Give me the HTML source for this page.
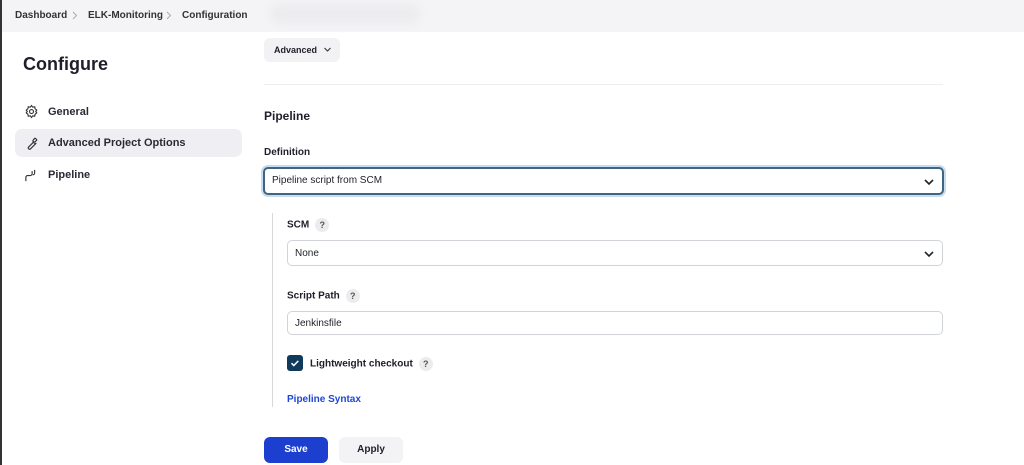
<!DOCTYPE html>
<html><head><meta charset="utf-8"><style>
*{box-sizing:border-box;margin:0;padding:0}
body{width:1024px;height:465px;overflow:hidden;background:#fff;font-family:"Liberation Sans",sans-serif;color:#1f1f2b;position:relative}
.lb{position:absolute;left:0;top:0;width:2px;height:465px;background:#333}
.hdr{position:absolute;left:2px;top:0;width:1022px;height:32px;background:#f4f4f6}
.blur{position:absolute;left:270px;top:4px;width:150px;height:20px;background:#ececef;border-radius:10px;filter:blur(4px)}
.bc{position:absolute;top:10px;font-size:10px;font-weight:bold;color:#333}
.abs{position:absolute}
h1{position:absolute;left:23px;top:54px;font-size:18px;font-weight:bold;color:#1f1f2b}
.nav{position:absolute;left:48px;font-size:11px;font-weight:bold;color:#2a2a36}
.sel{position:absolute;left:15px;top:129px;width:227px;height:28px;background:#efeff3;border-radius:7px}
.btnadv{position:absolute;left:264px;top:38px;width:76px;height:24px;background:#f2f2f5;border-radius:6px;font-size:9px;font-weight:bold;padding:7px 0 0 10px}
.hr{position:absolute;left:264px;top:84px;width:679px;height:1px;background:#eeeef0}
.lbl{position:absolute;font-size:10px;font-weight:bold}
.box{position:absolute;border:1px solid #d0d4d8;border-radius:5px;font-size:10px;padding:0 0 0 7px;background:#fff}
.q{display:inline-block;width:14px;height:14px;border-radius:7px;background:#ececee;font-size:9px;text-align:center;line-height:14px;margin-left:6px;vertical-align:middle;font-weight:bold;color:#555}
.chev{position:absolute;right:7px;top:8px}
</style></head><body>
<div class="lb"></div>
<div class="hdr"></div>
<div class="blur"></div>
<div class="bc" style="left:15px">Dashboard</div>
<svg class="abs" style="left:72px;top:11px" width="6" height="9" viewBox="0 0 6 9"><path d="M1 1l3.5 3.5L1 8" fill="none" stroke="#aaa" stroke-width="1"/></svg>
<div class="bc" style="left:88px">ELK-Monitoring</div>
<svg class="abs" style="left:166px;top:11px" width="6" height="9" viewBox="0 0 6 9"><path d="M1 1l3.5 3.5L1 8" fill="none" stroke="#aaa" stroke-width="1"/></svg>
<div class="bc" style="left:182px">Configuration</div>
<h1>Configure</h1>
<div class="sel"></div>
<svg class="abs" style="left:24px;top:104px" width="15" height="15" viewBox="0 0 24 24" fill="none" stroke="#333" stroke-width="1.8"><circle cx="12" cy="12" r="3.2"/><path d="M12 2.5l2 2.6 3.2-.6.6 3.2 2.6 2-1.6 2.3 1.6 2.3-2.6 2-.6 3.2-3.2-.6-2 2.6-2-2.6-3.2.6-.6-3.2-2.6-2 1.6-2.3L3.6 9.7l2.6-2 .6-3.2 3.2.6z"/></svg>
<div class="nav" style="top:106px">General</div>
<svg class="abs" style="left:24px;top:136px" width="15" height="15" viewBox="0 0 24 24" fill="none" stroke="#333" stroke-width="1.8"><path d="M14.5 6.5a4 4 0 0 0 5 5l-9 9a2.1 2.1 0 0 1-3-3l9-9 M14.5 6.5l3-3a5 5 0 0 1 3 3l-3 3"/></svg>
<div class="nav" style="top:137px">Advanced Project Options</div>
<svg class="abs" style="left:24px;top:168px" width="15" height="15" viewBox="0 0 24 24" fill="none" stroke="#333" stroke-width="1.8"><path d="M3 21v-6a3 3 0 0 1 3-3h4a3 3 0 0 0 3-3V5 M17 3v5a3 3 0 0 1-3 3"/></svg>
<div class="nav" style="top:169px">Pipeline</div>
<div class="btnadv">Advanced <svg width="9" height="7" viewBox="0 0 9 7" style="margin-left:3px"><path d="M1.5 2l3 3 3-3" fill="none" stroke="#333" stroke-width="1.1"/></svg></div>
<div class="hr"></div>
<div class="lbl" style="left:264px;top:109px;font-size:12px">Pipeline</div>
<div class="lbl" style="left:264px;top:147px">Definition</div>
<div class="box" style="left:263px;top:167px;width:681px;height:28px;border:2px solid #3f6583;box-shadow:0 0 0 2px #c8dcef;line-height:24px">Pipeline script from SCM
<svg class="chev" width="12" height="10" viewBox="0 0 12 10"><path d="M2 3l4 4 4-4" fill="none" stroke="#222" stroke-width="1.6"/></svg></div>
<div class="abs" style="left:272px;top:213px;width:1px;height:194px;background:#d8d8dc"></div>
<div class="lbl" style="left:287px;top:218px">SCM<span class="q">?</span></div>
<div class="box" style="left:287px;top:240px;width:656px;height:26px;line-height:25px">None
<svg class="chev" width="12" height="10" viewBox="0 0 12 10"><path d="M2 3l4 4 4-4" fill="none" stroke="#222" stroke-width="1.6"/></svg></div>
<div class="lbl" style="left:287px;top:289px">Script Path<span class="q">?</span></div>
<div class="box" style="left:287px;top:311px;width:656px;height:24px;line-height:23px">Jenkinsfile</div>
<div class="abs" style="left:287px;top:355px;width:16px;height:16px;background:#0f3a5c;border-radius:3px"><svg width="16" height="16" viewBox="0 0 16 16"><path d="M4.5 8.2l2.3 2.3 4.5-4.6" fill="none" stroke="#fff" stroke-width="1.5"/></svg></div>
<div class="lbl" style="left:310px;top:357px">Lightweight checkout<span class="q">?</span></div>
<div class="lbl" style="left:287px;top:394px;color:#1f47d6">Pipeline Syntax</div>
<div class="abs" style="left:264px;top:437px;width:64px;height:26px;background:#1d3fd0;border-radius:6px;color:#fff;font-size:10px;font-weight:bold;text-align:center;line-height:26px">Save</div>
<div class="abs" style="left:339px;top:437px;width:64px;height:26px;background:#f3f3f6;border-radius:6px;font-size:10px;font-weight:bold;text-align:center;line-height:26px">Apply</div>
</body></html>
